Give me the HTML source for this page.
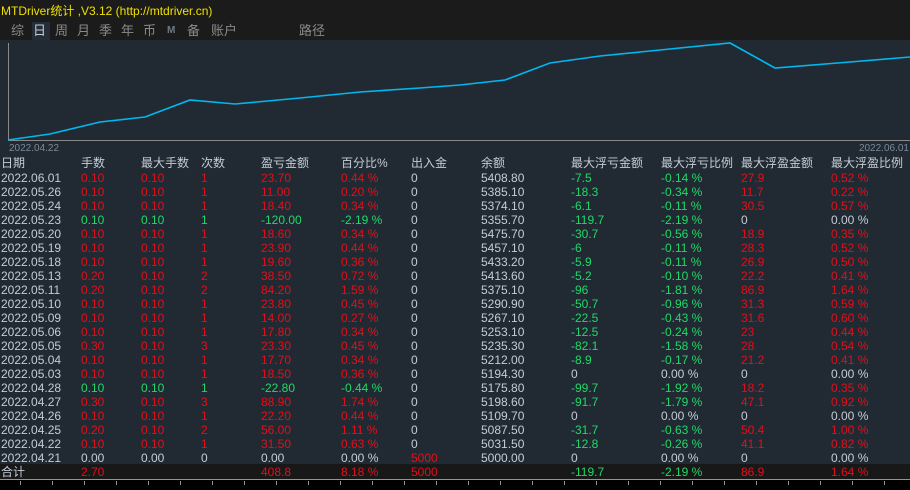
<!DOCTYPE html>
<html><head><meta charset="utf-8"><style>
*{margin:0;padding:0;box-sizing:border-box}
body{width:910px;height:490px;background:#000;overflow:hidden;position:relative;font-family:"Liberation Sans","Noto Sans CJK SC",sans-serif;font-size:12px}
#top{position:absolute;left:0;top:0;width:910px;height:40px;background:#1b1b1b}
#title{position:absolute;left:1px;top:2px;color:#f0e000;font-size:12px}
.tab{position:absolute;top:23px;color:#8a8a8a;font-size:13px;line-height:16px}
#main{position:absolute;left:0;top:40px;width:910px;height:424px;background:#212a33}
#tot{position:absolute;left:0;top:464px;width:910px;height:15px;background:#181818}
#axis{position:absolute;left:0;top:479px;width:910px;height:1px;background:#8a96a2}
.tk{position:absolute;top:481px;width:1px;height:4px;background:#8a96a2}
.r{position:absolute;left:0;width:910px;height:14px;line-height:14px;white-space:nowrap}
.r span{position:absolute;top:0}
.h{color:#c4ccd6;font-size:12px}
.W{color:#c4ccd6}.R{color:#e0101a}.G{color:#20d868}
</style></head><body>
<div id="top"></div>
<div id="title">MTDriver统计 ,V3.12 (http://mtdriver.cn)</div>
<div style="position:absolute;left:32px;top:22px;width:18px;height:18px;background:#252e38"></div>
<span class="tab" style="left:11px">综</span>
<span class="tab" style="left:33px;color:#c4ccd6">日</span>
<span class="tab" style="left:55px">周</span>
<span class="tab" style="left:77px">月</span>
<span class="tab" style="left:99px">季</span>
<span class="tab" style="left:121px">年</span>
<span class="tab" style="left:143px">币</span>
<span class="tab" style="left:167px;font-size:10px;font-weight:bold;color:#707a84">M</span>
<span class="tab" style="left:187px">备</span>
<span class="tab" style="left:211px">账户</span>
<span class="tab" style="left:299px">路径</span>
<div id="main"></div>
<svg style="position:absolute;left:0;top:40px" width="910" height="110">
<line x1="8.5" y1="3" x2="8.5" y2="100" stroke="#8a8a8a"/>
<line x1="8" y1="100.5" x2="910" y2="100.5" stroke="#8a8a8a"/>
<polyline fill="none" stroke="#00b8f0" stroke-width="1.6" points="8,100 50,94 100,82 145,77 190,60 235,64 300,58 360,52 420,48 460,45 505,40 550,23 600,16 660,10 730,3 775,28 850,22 910,17"/>
</svg>
<div style="position:absolute;left:9px;top:143px;color:#7a8a98;font-size:10px">2022.04.22</div>
<div style="position:absolute;right:1px;top:143px;color:#7a8a98;font-size:10px">2022.06.01</div>

<div class="r h" style="top:156px"><span style="left:1px">日期</span><span style="left:81px">手数</span><span style="left:141px">最大手数</span><span style="left:201px">次数</span><span style="left:261px">盈亏金额</span><span style="left:341px">百分比%</span><span style="left:411px">出入金</span><span style="left:481px">余额</span><span style="left:571px">最大浮亏金额</span><span style="left:661px">最大浮亏比例</span><span style="left:741px">最大浮盈金额</span><span style="left:831px">最大浮盈比例</span></div>

<div class="r" style="top:171px"><span class="W" style="left:1px">2022.06.01</span><span class="R" style="left:81px">0.10</span><span class="R" style="left:141px">0.10</span><span class="R" style="left:201px">1</span><span class="R" style="left:261px">23.70</span><span class="R" style="left:341px">0.44 %</span><span class="W" style="left:411px">0</span><span class="W" style="left:481px">5408.80</span><span class="G" style="left:571px">-7.5</span><span class="G" style="left:661px">-0.14 %</span><span class="R" style="left:741px">27.9</span><span class="R" style="left:831px">0.52 %</span></div>
<div class="r" style="top:185px"><span class="W" style="left:1px">2022.05.26</span><span class="R" style="left:81px">0.10</span><span class="R" style="left:141px">0.10</span><span class="R" style="left:201px">1</span><span class="R" style="left:261px">11.00</span><span class="R" style="left:341px">0.20 %</span><span class="W" style="left:411px">0</span><span class="W" style="left:481px">5385.10</span><span class="G" style="left:571px">-18.3</span><span class="G" style="left:661px">-0.34 %</span><span class="R" style="left:741px">11.7</span><span class="R" style="left:831px">0.22 %</span></div>
<div class="r" style="top:199px"><span class="W" style="left:1px">2022.05.24</span><span class="R" style="left:81px">0.10</span><span class="R" style="left:141px">0.10</span><span class="R" style="left:201px">1</span><span class="R" style="left:261px">18.40</span><span class="R" style="left:341px">0.34 %</span><span class="W" style="left:411px">0</span><span class="W" style="left:481px">5374.10</span><span class="G" style="left:571px">-6.1</span><span class="G" style="left:661px">-0.11 %</span><span class="R" style="left:741px">30.5</span><span class="R" style="left:831px">0.57 %</span></div>
<div class="r" style="top:213px"><span class="W" style="left:1px">2022.05.23</span><span class="G" style="left:81px">0.10</span><span class="G" style="left:141px">0.10</span><span class="G" style="left:201px">1</span><span class="G" style="left:261px">-120.00</span><span class="G" style="left:341px">-2.19 %</span><span class="W" style="left:411px">0</span><span class="W" style="left:481px">5355.70</span><span class="G" style="left:571px">-119.7</span><span class="G" style="left:661px">-2.19 %</span><span class="W" style="left:741px">0</span><span class="W" style="left:831px">0.00 %</span></div>
<div class="r" style="top:227px"><span class="W" style="left:1px">2022.05.20</span><span class="R" style="left:81px">0.10</span><span class="R" style="left:141px">0.10</span><span class="R" style="left:201px">1</span><span class="R" style="left:261px">18.60</span><span class="R" style="left:341px">0.34 %</span><span class="W" style="left:411px">0</span><span class="W" style="left:481px">5475.70</span><span class="G" style="left:571px">-30.7</span><span class="G" style="left:661px">-0.56 %</span><span class="R" style="left:741px">18.9</span><span class="R" style="left:831px">0.35 %</span></div>
<div class="r" style="top:241px"><span class="W" style="left:1px">2022.05.19</span><span class="R" style="left:81px">0.10</span><span class="R" style="left:141px">0.10</span><span class="R" style="left:201px">1</span><span class="R" style="left:261px">23.90</span><span class="R" style="left:341px">0.44 %</span><span class="W" style="left:411px">0</span><span class="W" style="left:481px">5457.10</span><span class="G" style="left:571px">-6</span><span class="G" style="left:661px">-0.11 %</span><span class="R" style="left:741px">28.3</span><span class="R" style="left:831px">0.52 %</span></div>
<div class="r" style="top:255px"><span class="W" style="left:1px">2022.05.18</span><span class="R" style="left:81px">0.10</span><span class="R" style="left:141px">0.10</span><span class="R" style="left:201px">1</span><span class="R" style="left:261px">19.60</span><span class="R" style="left:341px">0.36 %</span><span class="W" style="left:411px">0</span><span class="W" style="left:481px">5433.20</span><span class="G" style="left:571px">-5.9</span><span class="G" style="left:661px">-0.11 %</span><span class="R" style="left:741px">26.9</span><span class="R" style="left:831px">0.50 %</span></div>
<div class="r" style="top:269px"><span class="W" style="left:1px">2022.05.13</span><span class="R" style="left:81px">0.20</span><span class="R" style="left:141px">0.10</span><span class="R" style="left:201px">2</span><span class="R" style="left:261px">38.50</span><span class="R" style="left:341px">0.72 %</span><span class="W" style="left:411px">0</span><span class="W" style="left:481px">5413.60</span><span class="G" style="left:571px">-5.2</span><span class="G" style="left:661px">-0.10 %</span><span class="R" style="left:741px">22.2</span><span class="R" style="left:831px">0.41 %</span></div>
<div class="r" style="top:283px"><span class="W" style="left:1px">2022.05.11</span><span class="R" style="left:81px">0.20</span><span class="R" style="left:141px">0.10</span><span class="R" style="left:201px">2</span><span class="R" style="left:261px">84.20</span><span class="R" style="left:341px">1.59 %</span><span class="W" style="left:411px">0</span><span class="W" style="left:481px">5375.10</span><span class="G" style="left:571px">-96</span><span class="G" style="left:661px">-1.81 %</span><span class="R" style="left:741px">86.9</span><span class="R" style="left:831px">1.64 %</span></div>
<div class="r" style="top:297px"><span class="W" style="left:1px">2022.05.10</span><span class="R" style="left:81px">0.10</span><span class="R" style="left:141px">0.10</span><span class="R" style="left:201px">1</span><span class="R" style="left:261px">23.80</span><span class="R" style="left:341px">0.45 %</span><span class="W" style="left:411px">0</span><span class="W" style="left:481px">5290.90</span><span class="G" style="left:571px">-50.7</span><span class="G" style="left:661px">-0.96 %</span><span class="R" style="left:741px">31.3</span><span class="R" style="left:831px">0.59 %</span></div>
<div class="r" style="top:311px"><span class="W" style="left:1px">2022.05.09</span><span class="R" style="left:81px">0.10</span><span class="R" style="left:141px">0.10</span><span class="R" style="left:201px">1</span><span class="R" style="left:261px">14.00</span><span class="R" style="left:341px">0.27 %</span><span class="W" style="left:411px">0</span><span class="W" style="left:481px">5267.10</span><span class="G" style="left:571px">-22.5</span><span class="G" style="left:661px">-0.43 %</span><span class="R" style="left:741px">31.6</span><span class="R" style="left:831px">0.60 %</span></div>
<div class="r" style="top:325px"><span class="W" style="left:1px">2022.05.06</span><span class="R" style="left:81px">0.10</span><span class="R" style="left:141px">0.10</span><span class="R" style="left:201px">1</span><span class="R" style="left:261px">17.80</span><span class="R" style="left:341px">0.34 %</span><span class="W" style="left:411px">0</span><span class="W" style="left:481px">5253.10</span><span class="G" style="left:571px">-12.5</span><span class="G" style="left:661px">-0.24 %</span><span class="R" style="left:741px">23</span><span class="R" style="left:831px">0.44 %</span></div>
<div class="r" style="top:339px"><span class="W" style="left:1px">2022.05.05</span><span class="R" style="left:81px">0.30</span><span class="R" style="left:141px">0.10</span><span class="R" style="left:201px">3</span><span class="R" style="left:261px">23.30</span><span class="R" style="left:341px">0.45 %</span><span class="W" style="left:411px">0</span><span class="W" style="left:481px">5235.30</span><span class="G" style="left:571px">-82.1</span><span class="G" style="left:661px">-1.58 %</span><span class="R" style="left:741px">28</span><span class="R" style="left:831px">0.54 %</span></div>
<div class="r" style="top:353px"><span class="W" style="left:1px">2022.05.04</span><span class="R" style="left:81px">0.10</span><span class="R" style="left:141px">0.10</span><span class="R" style="left:201px">1</span><span class="R" style="left:261px">17.70</span><span class="R" style="left:341px">0.34 %</span><span class="W" style="left:411px">0</span><span class="W" style="left:481px">5212.00</span><span class="G" style="left:571px">-8.9</span><span class="G" style="left:661px">-0.17 %</span><span class="R" style="left:741px">21.2</span><span class="R" style="left:831px">0.41 %</span></div>
<div class="r" style="top:367px"><span class="W" style="left:1px">2022.05.03</span><span class="R" style="left:81px">0.10</span><span class="R" style="left:141px">0.10</span><span class="R" style="left:201px">1</span><span class="R" style="left:261px">18.50</span><span class="R" style="left:341px">0.36 %</span><span class="W" style="left:411px">0</span><span class="W" style="left:481px">5194.30</span><span class="W" style="left:571px">0</span><span class="W" style="left:661px">0.00 %</span><span class="W" style="left:741px">0</span><span class="W" style="left:831px">0.00 %</span></div>
<div class="r" style="top:381px"><span class="W" style="left:1px">2022.04.28</span><span class="G" style="left:81px">0.10</span><span class="G" style="left:141px">0.10</span><span class="G" style="left:201px">1</span><span class="G" style="left:261px">-22.80</span><span class="G" style="left:341px">-0.44 %</span><span class="W" style="left:411px">0</span><span class="W" style="left:481px">5175.80</span><span class="G" style="left:571px">-99.7</span><span class="G" style="left:661px">-1.92 %</span><span class="R" style="left:741px">18.2</span><span class="R" style="left:831px">0.35 %</span></div>
<div class="r" style="top:395px"><span class="W" style="left:1px">2022.04.27</span><span class="R" style="left:81px">0.30</span><span class="R" style="left:141px">0.10</span><span class="R" style="left:201px">3</span><span class="R" style="left:261px">88.90</span><span class="R" style="left:341px">1.74 %</span><span class="W" style="left:411px">0</span><span class="W" style="left:481px">5198.60</span><span class="G" style="left:571px">-91.7</span><span class="G" style="left:661px">-1.79 %</span><span class="R" style="left:741px">47.1</span><span class="R" style="left:831px">0.92 %</span></div>
<div class="r" style="top:409px"><span class="W" style="left:1px">2022.04.26</span><span class="R" style="left:81px">0.10</span><span class="R" style="left:141px">0.10</span><span class="R" style="left:201px">1</span><span class="R" style="left:261px">22.20</span><span class="R" style="left:341px">0.44 %</span><span class="W" style="left:411px">0</span><span class="W" style="left:481px">5109.70</span><span class="W" style="left:571px">0</span><span class="W" style="left:661px">0.00 %</span><span class="W" style="left:741px">0</span><span class="W" style="left:831px">0.00 %</span></div>
<div class="r" style="top:423px"><span class="W" style="left:1px">2022.04.25</span><span class="R" style="left:81px">0.20</span><span class="R" style="left:141px">0.10</span><span class="R" style="left:201px">2</span><span class="R" style="left:261px">56.00</span><span class="R" style="left:341px">1.11 %</span><span class="W" style="left:411px">0</span><span class="W" style="left:481px">5087.50</span><span class="G" style="left:571px">-31.7</span><span class="G" style="left:661px">-0.63 %</span><span class="R" style="left:741px">50.4</span><span class="R" style="left:831px">1.00 %</span></div>
<div class="r" style="top:437px"><span class="W" style="left:1px">2022.04.22</span><span class="R" style="left:81px">0.10</span><span class="R" style="left:141px">0.10</span><span class="R" style="left:201px">1</span><span class="R" style="left:261px">31.50</span><span class="R" style="left:341px">0.63 %</span><span class="W" style="left:411px">0</span><span class="W" style="left:481px">5031.50</span><span class="G" style="left:571px">-12.8</span><span class="G" style="left:661px">-0.26 %</span><span class="R" style="left:741px">41.1</span><span class="R" style="left:831px">0.82 %</span></div>
<div class="r" style="top:451px"><span class="W" style="left:1px">2022.04.21</span><span class="W" style="left:81px">0.00</span><span class="W" style="left:141px">0.00</span><span class="W" style="left:201px">0</span><span class="W" style="left:261px">0.00</span><span class="W" style="left:341px">0.00 %</span><span class="R" style="left:411px">5000</span><span class="W" style="left:481px">5000.00</span><span class="W" style="left:571px">0</span><span class="W" style="left:661px">0.00 %</span><span class="W" style="left:741px">0</span><span class="W" style="left:831px">0.00 %</span></div>
<div id="tot"></div>
<div class="r" style="top:465px"><span class="h" style="left:1px">合计</span><span class="R" style="left:81px">2.70</span><span class="R" style="left:261px">408.8</span><span class="R" style="left:341px">8.18 %</span><span class="R" style="left:411px">5000</span><span class="G" style="left:571px">-119.7</span><span class="G" style="left:661px">-2.19 %</span><span class="R" style="left:741px">86.9</span><span class="R" style="left:831px">1.64 %</span></div>
<div id="axis"></div>
<div class="tk" style="left:20px"></div><div class="tk" style="left:52px"></div><div class="tk" style="left:84px"></div><div class="tk" style="left:116px"></div><div class="tk" style="left:148px"></div><div class="tk" style="left:180px"></div><div class="tk" style="left:212px"></div><div class="tk" style="left:244px"></div><div class="tk" style="left:276px"></div><div class="tk" style="left:308px"></div><div class="tk" style="left:340px"></div><div class="tk" style="left:372px"></div><div class="tk" style="left:404px"></div><div class="tk" style="left:436px"></div><div class="tk" style="left:468px"></div><div class="tk" style="left:500px"></div><div class="tk" style="left:532px"></div><div class="tk" style="left:564px"></div><div class="tk" style="left:596px"></div><div class="tk" style="left:628px"></div><div class="tk" style="left:660px"></div><div class="tk" style="left:692px"></div><div class="tk" style="left:724px"></div><div class="tk" style="left:756px"></div><div class="tk" style="left:788px"></div><div class="tk" style="left:820px"></div><div class="tk" style="left:852px"></div><div class="tk" style="left:884px"></div>
</body></html>
